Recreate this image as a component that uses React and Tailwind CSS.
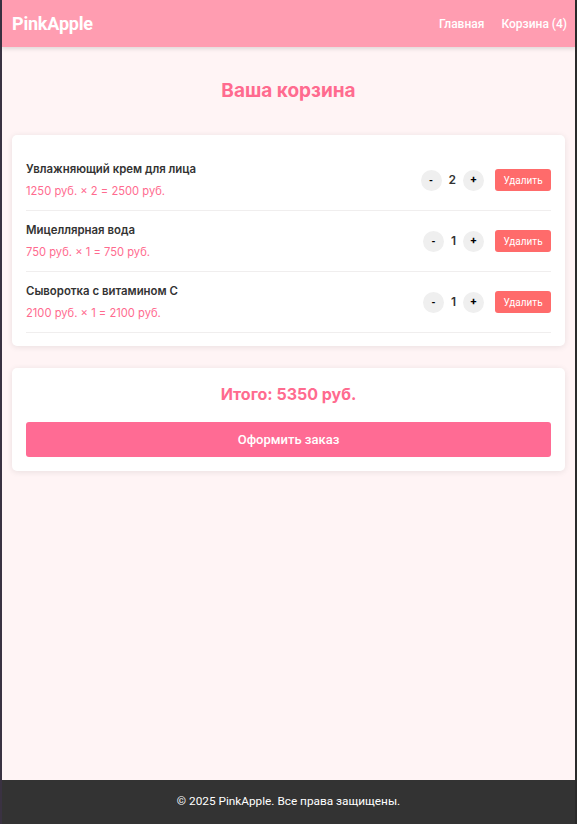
import React from "react";

const items = [
  { name: "Увлажняющий крем для лица", price: 1250, qty: 2 },
  { name: "Мицеллярная вода", price: 750, qty: 1 },
  { name: "Сыворотка с витамином С", price: 2100, qty: 1 },
];

export default function App() {
  return (
    <div className="min-h-screen flex flex-col bg-[#fff4f5] border-l-2 border-l-[#3a3242] border-r-2 border-r-[#2b2b2b] font-['Inter',sans-serif]">
      <header className="h-[47px] bg-[#ff9db1] flex items-center justify-between pl-[10px] pr-[8px] shadow-[0_2px_4px_rgba(0,0,0,0.12)] relative z-10 font-['Roboto',sans-serif]">
        <div className="text-white font-bold text-[18px] tracking-[-0.2px]">PinkApple</div>
        <nav className="flex gap-[17px] text-white text-[12px] font-medium">
          <span>Главная</span>
          <span>Корзина (4)</span>
        </nav>
      </header>

      <main className="flex-1 px-[10px] pt-[30px]">
        <h2 className="text-center text-[#ff6b8f] font-bold text-[19px] leading-[28px] mb-[30px]">
          Ваша корзина
        </h2>

        <div className="bg-white rounded-[5px] shadow-[0_1px_6px_rgba(0,0,0,0.09)] px-[14px] pt-[15px] pb-[13px]">
          {items.map((it, i) => (
            <div
              key={i}
              className="flex items-center justify-between border-b border-[#f0eeee] py-[11px]"
            >
              <div>
                <div className="text-[#333] font-semibold text-[11.4px] leading-[16px] mb-[6px]">
                  {it.name}
                </div>
                <div className="text-[#ff6b8f] text-[11.2px] leading-[16px]">
                  {it.price} руб. × {it.qty} = {it.price * it.qty} руб.
                </div>
              </div>
              <div className="flex items-center">
                <button className="w-[21px] h-[21px] rounded-full bg-[#efefef] text-[10px] font-bold text-black flex items-center justify-center font-['Roboto',sans-serif]">
                  -
                </button>
                <span className="mx-[7px] text-[12px] font-semibold text-[#333]">{it.qty}</span>
                <button className="w-[21px] h-[21px] rounded-full bg-[#efefef] text-[11px] font-bold text-black flex items-center justify-center font-['Roboto',sans-serif]">
                  +
                </button>
                <button className="ml-[11px] w-[56px] h-[22px] rounded-[3px] bg-[#ff6b6b] text-white text-[10px] font-['Roboto',sans-serif]">
                  Удалить
                </button>
              </div>
            </div>
          ))}
        </div>

        <div className="mt-[22px] bg-white rounded-[5px] shadow-[0_1px_6px_rgba(0,0,0,0.09)] px-[14px] pt-[14px] pb-[14px]">
          <div className="text-center text-[#ff6b8f] font-bold text-[16px] leading-[24px] mb-[16px]">
            Итого: 5350 руб.
          </div>
          <button className="w-full h-[35px] rounded-[3px] bg-[#ff6b94] text-white text-[13px] font-medium font-['Roboto',sans-serif]">
            Оформить заказ
          </button>
        </div>
      </main>

      <footer className="h-[44px] bg-[#333333] flex items-center justify-center text-white text-[11.8px] font-['Roboto',sans-serif]">
        © 2025 PinkApple. Все права защищены.
      </footer>
    </div>
  );
}
